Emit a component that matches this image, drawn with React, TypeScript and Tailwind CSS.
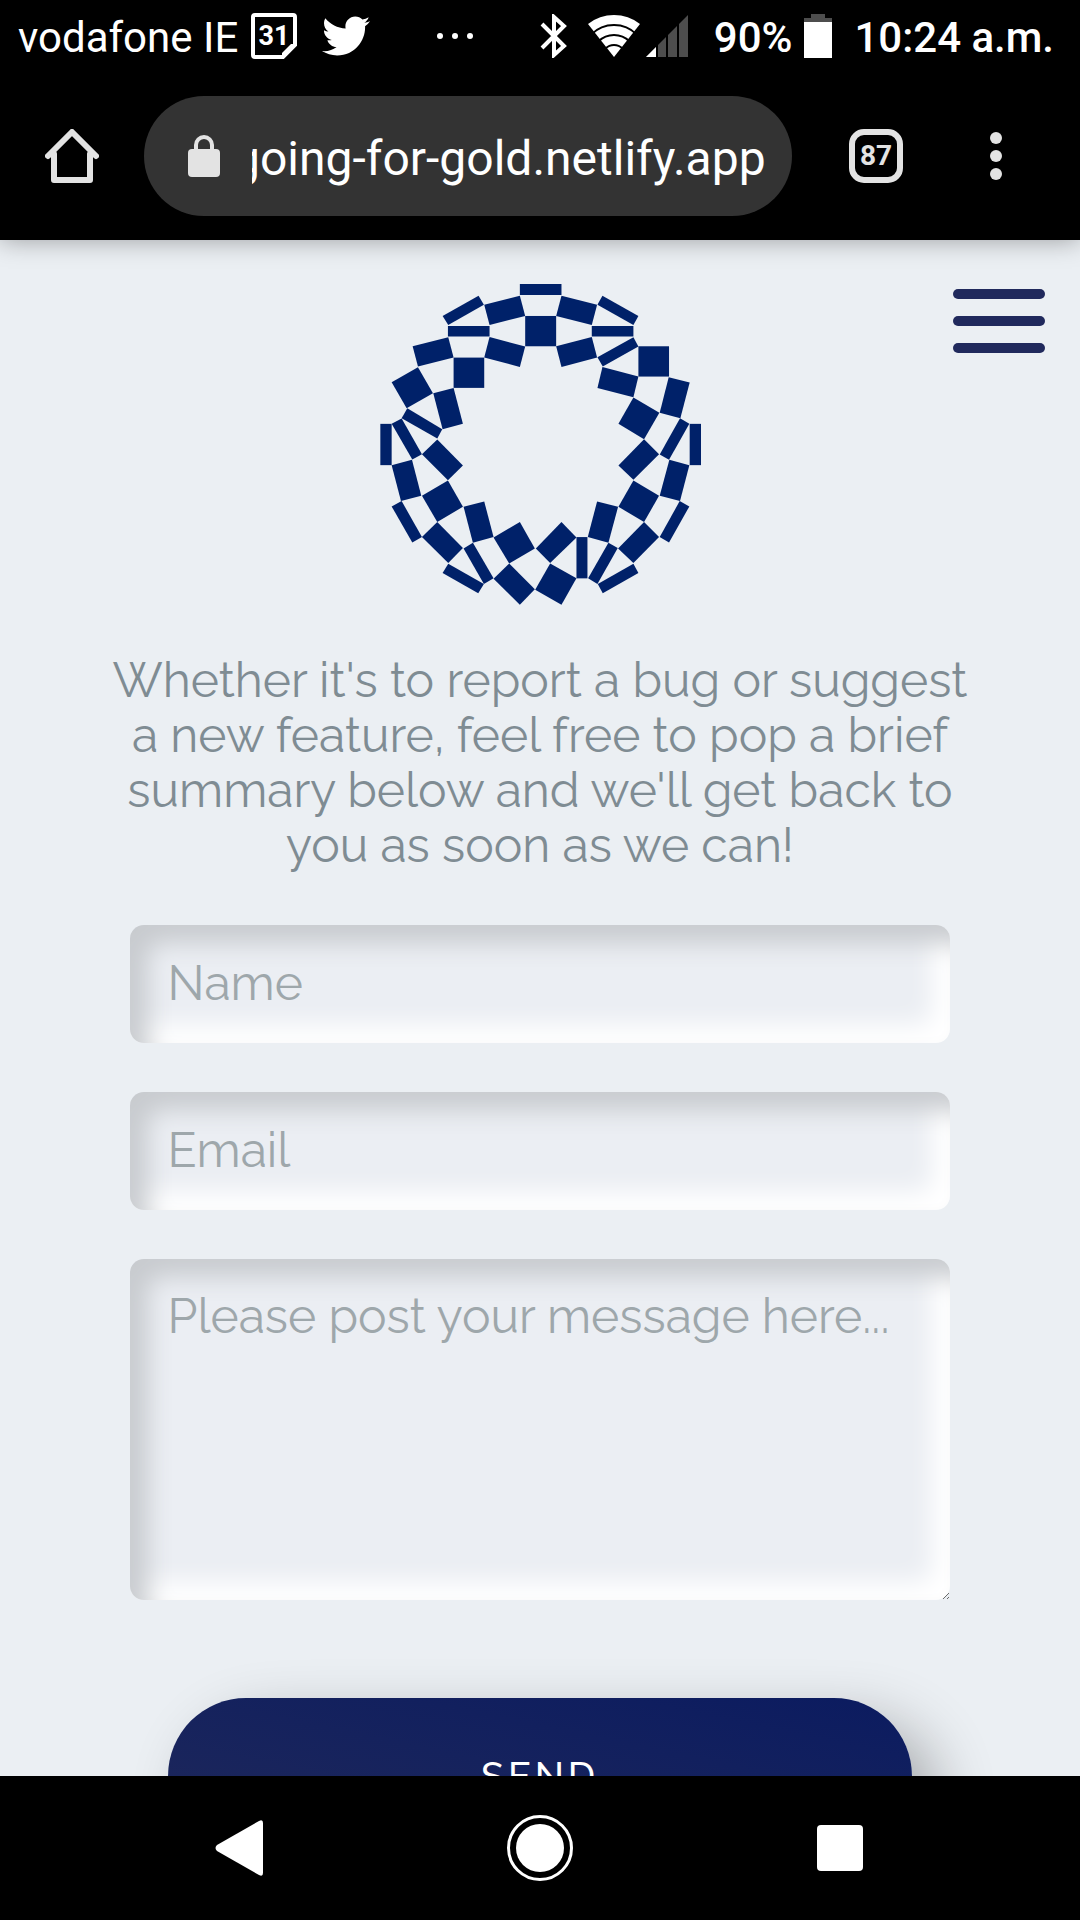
import { useEffect, useRef } from "react";
import { FaTwitter } from "react-icons/fa";

const TILES = [
  "451,42 576,42 576,75 451,75",
  "344,104 451,77 467,138 360,165",
  "219,138 327,77 343,104 236,165",
  "235,168 360,168 360,200 235,200",
  "360,201 467,230 451,291 344,263",
  "129,229 236,202 252,263 145,290",
  "252,263 344,263 344,354 252,354",
  "467,138 560,138 560,229 467,229",
  "66,337 145,292 190,370 111,415",
  "191,370 252,354 280,462 219,478",
  "113,415 218,478 203,506 96,445",
  "32,462 66,462 66,586 32,586",
  "66,462 96,446 157,553 128,569",
  "157,553 203,509 280,587 235,631",
  "66,586 127,570 155,678 94,694",
  "157,678 235,632 280,711 203,757",
  "66,710 96,694 157,802 128,818",
  "157,802 203,757 280,835 236,880",
  "282,711 344,695 372,802 310,819",
  "282,836 310,819 372,926 343,943",
  "236,882 343,943 326,971 219,910",
  "372,803 451,757 496,836 419,881",
  "372,927 419,881 496,959 451,1005",
  "499,836 576,757 621,803 542,880",
  "542,881 621,926 576,1005 497,960",
  "621,802 654,802 654,926 621,926",
  "683,695 746,711 717,819 655,802",
  "717,819 745,835 684,943 656,926",
  "685,943 792,882 807,910 700,971",
  "746,836 824,757 869,802 792,880",
  "792,632 869,678 824,757 747,711",
  "931,694 960,710 899,818 871,802",
  "900,570 960,586 932,694 871,678",
  "824,508 869,553 792,630 747,587",
  "961,462 995,462 995,586 961,586",
  "932,445 960,462 899,570 871,554",
  "898,322 961,338 933,445 871,429",
  "807,229 899,229 899,320 807,320",
  "792,383 870,429 824,508 747,462",
  "699,291 807,320 792,382 684,354",
  "792,202 807,230 700,290 684,262",
  "667,168 792,168 792,200 667,200",
  "699,77 807,138 792,165 684,104",
  "576,77 683,104 667,165 560,138",
  "560,229 667,201 683,263 576,291",
];

function Logo() {
  return (
    <svg className="h-[322px] w-[322px]" viewBox="28 42 967 967" fill="#002169" role="img" aria-label="Going for Gold">
      {TILES.map((points) => (
        <polygon key={points} points={points} />
      ))}
    </svg>
  );
}

function CalendarIcon() {
  return (
    <svg className="h-12 w-12" viewBox="0 0 48 48" aria-hidden="true">
      <path d="M5 3H43Q45 3 45 5V33L33 45H5Q3 45 3 43V5Q3 3 5 3Z" fill="none" stroke="#fff" strokeWidth="4" />
      <path d="M45 32V34L34 45H32V41L41 32Z" fill="#fff" />
      <text x="24" y="33" textAnchor="middle" fontFamily="Roboto, sans-serif" fontWeight="700" fontSize="27" fill="#fff">
        31
      </text>
    </svg>
  );
}

function BluetoothIcon() {
  return (
    <svg className="h-11 w-7" viewBox="0 0 28 44" fill="none" stroke="#fff" strokeWidth="4" aria-hidden="true">
      <path d="M2 10L24 32L14 41V3L24 12L2 34" />
    </svg>
  );
}

function WifiIcon() {
  return (
    <svg className="h-11 w-[52px]" viewBox="0 0 52 44" aria-hidden="true">
      <path d="M26 43L0 10A42 42 0 0 1 52 10Z" fill="#fff" />
      <g fill="none" stroke="#000" strokeWidth="2">
        <circle cx="26" cy="43" r="32" />
        <circle cx="26" cy="43" r="22" />
        <circle cx="26" cy="43" r="12" />
      </g>
    </svg>
  );
}

function SignalIcon() {
  return (
    <svg className="h-[42px] w-[42px]" viewBox="0 0 42 42" aria-hidden="true">
      <path d="M0 42L42 0V42Z" fill="#4d4d4d" />
      <path d="M0 42L10 32V42Z" fill="#fff" />
      <path d="M11 0V42M21 0V42M32 0V42" stroke="#000" strokeWidth="2" />
    </svg>
  );
}

function BatteryIcon() {
  return (
    <svg className="h-11 w-7" viewBox="0 0 28 44" aria-hidden="true">
      <path d="M7 0H21V4H28V8H0V4H7Z" fill="#4d4d4d" />
      <path d="M0 8H28V44H0Z" fill="#fff" />
    </svg>
  );
}

function StatusBar() {
  return (
    <div className="flex h-[72px] items-center justify-between pl-[18px] pr-[26px] text-[42px] leading-[48px]">
      <div className="flex items-center">
        <span className="pt-1">vodafone IE</span>
        <span className="ml-3">
          <CalendarIcon />
        </span>
        <FaTwitter className="ml-6 h-12 w-12" aria-hidden="true" />
        <span className="ml-16 flex gap-[9px] px-[3px]" aria-hidden="true">
          <span className="h-1.5 w-1.5 rounded-full bg-white" />
          <span className="h-1.5 w-1.5 rounded-full bg-white" />
          <span className="h-1.5 w-1.5 rounded-full bg-white" />
        </span>
      </div>
      <div className="flex items-center font-medium">
        <BluetoothIcon />
        <span className="ml-5">
          <WifiIcon />
        </span>
        <span className="ml-1.5">
          <SignalIcon />
        </span>
        <span className="ml-[26px] pt-1">90%</span>
        <span className="ml-3">
          <BatteryIcon />
        </span>
        <span className="ml-[22px] pt-1">10:24 a.m.</span>
      </div>
    </div>
  );
}

function AddressBar() {
  const field = useRef<HTMLInputElement>(null);
  useEffect(() => {
    if (field.current) field.current.scrollLeft = field.current.scrollWidth;
  }, []);
  return (
    <label className="flex h-[120px] min-w-0 flex-1 items-center rounded-full bg-[#333333] pl-11 pr-[26px]">
      <svg className="h-[42px] w-8 shrink-0" viewBox="0 0 32 42" aria-hidden="true">
        <path d="M8 16V10A8 8 0 0 1 24 10V16" fill="none" stroke="#e3e3e3" strokeWidth="4" />
        <rect y="14" width="32" height="28" rx="4" fill="#e3e3e3" />
      </svg>
      <input
        ref={field}
        type="text"
        aria-label="Address"
        defaultValue="going-for-gold.netlify.app"
        className="ml-8 h-[68px] min-w-0 flex-1 bg-transparent pt-1 text-[48px] leading-[64px] text-white outline-none"
      />
    </label>
  );
}

function BrowserBar() {
  return (
    <div className="flex h-[168px] items-center pl-[45px] pr-[78px]">
      <button type="button" aria-label="Home" className="mr-[45px]">
        <svg className="h-[54px] w-[54px]" viewBox="0 0 54 54" fill="none" stroke="#e3e3e3" strokeWidth="6" strokeLinecap="round" strokeLinejoin="round">
          <path d="M9 25V51H45V25" />
          <path d="M3 27L27 3L51 27" />
        </svg>
      </button>
      <AddressBar />
      <button
        type="button"
        aria-label="87 open tabs"
        className="ml-[57px] flex h-[54px] w-[54px] items-center justify-center rounded-[15px] border-[6px] border-[#e3e3e3] text-[28px] leading-[30px] font-bold text-[#e3e3e3]"
      >
        87
      </button>
      <button type="button" aria-label="More options" className="ml-[87px] flex h-[54px] flex-col items-center justify-center gap-1.5">
        <span className="h-3 w-3 rounded-full bg-[#e3e3e3]" />
        <span className="h-3 w-3 rounded-full bg-[#e3e3e3]" />
        <span className="h-3 w-3 rounded-full bg-[#e3e3e3]" />
      </button>
    </div>
  );
}

const FIELD =
  "block w-full rounded-[14px] bg-[#ebeef3] px-[38px] text-[48px] leading-[56px] text-[#5f6b73] outline-none placeholder:text-[#9ea7ab] shadow-[inset_18px_18px_24px_#c8cbcf,inset_-18px_-18px_24px_#ffffff]";

function ContactForm() {
  return (
    <form className="mx-auto mt-[50px] flex w-[76%] flex-col gap-[49px]" onSubmit={(e) => e.preventDefault()}>
      <input type="text" name="name" aria-label="Name" placeholder="Name" className={FIELD + " h-[118px] pb-0.5"} />
      <input type="email" name="email" aria-label="Email" placeholder="Email" className={FIELD + " h-[118px] pb-0.5"} />
      <div className="relative">
        <textarea
          name="message"
          aria-label="Message"
          placeholder="Please post your message here..."
          className={FIELD + " h-[341px] resize-none py-[29px]"}
        />
        <svg className="absolute right-0 bottom-0 h-2 w-2" viewBox="0 0 8 8" stroke="#6b6b6b" aria-hidden="true">
          <path d="M1 7L7 1M5 7L7 5" />
        </svg>
      </div>
      <button
        type="submit"
        className="mx-[38px] mt-[49px] h-[156px] shrink-0 rounded-full bg-linear-to-tr from-[#1f285a] to-[#0b1b60] text-[38px] leading-[44px] font-medium tracking-widest text-white shadow-[24px_24px_60px_rgba(0,0,0,0.3)]"
      >
        SEND
      </button>
    </form>
  );
}

function NavigationBar() {
  return (
    <nav className="relative z-10 flex h-36 shrink-0 items-center justify-between bg-black pr-[217px] pl-[215px]" aria-label="System">
      <button type="button" aria-label="Back">
        <svg className="h-14 w-12" viewBox="0 0 48 56" fill="#fff">
          <path d="M48 3V53Q48 57 44 55L2 31Q-1 28 2 25L44 1Q48 -1 48 3Z" />
        </svg>
      </button>
      <button type="button" aria-label="Home screen" className="flex h-[66px] w-[66px] items-center justify-center rounded-full border-[3px] border-white">
        <span className="h-12 w-12 rounded-full bg-white" />
      </button>
      <button type="button" aria-label="Recent apps" className="h-[46px] w-[46px] rounded-[4px] bg-white" />
    </nav>
  );
}

export default function App() {
  return (
    <div className="flex h-screen flex-col bg-[#ebeff3] font-[Roboto,sans-serif]">
      <header className="relative z-10 shrink-0 bg-black text-white shadow-[0_0_24px_rgba(0,0,0,0.35)]">
        <StatusBar />
        <BrowserBar />
      </header>
      <main className="relative min-h-0 flex-1 overflow-y-auto px-0 pt-11 font-[Raleway,Lato,sans-serif] [scrollbar-width:none]">
        <button type="button" aria-label="Open menu" className="absolute top-[49px] right-[35px] flex w-[92px] flex-col gap-[17px]">
          <span className="h-2.5 rounded-full bg-[#20295c]" />
          <span className="h-2.5 rounded-full bg-[#20295c]" />
          <span className="h-2.5 rounded-full bg-[#20295c]" />
        </button>
        <div className="flex justify-center">
          <Logo />
        </div>
        <p className="mx-auto mt-[47px] mb-[52px] w-[82%] text-center text-[48px] leading-[55px] text-[#7f8c93]">
          Whether it's to report a bug or suggest a new feature, feel free to pop a brief summary below and we'll get back to you
          as soon as we can!
        </p>
        <ContactForm />
      </main>
      <NavigationBar />
    </div>
  );
}
